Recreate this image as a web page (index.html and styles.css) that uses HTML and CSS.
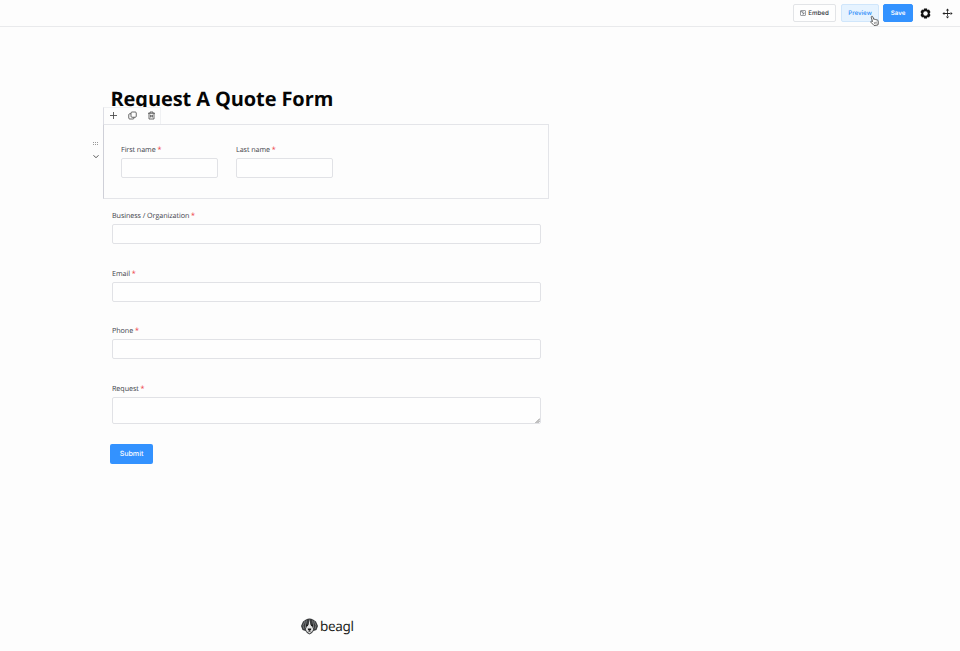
FILE: index.html
```html
<!DOCTYPE html>
<html lang="en">
<head>
<meta charset="utf-8">
<title>Request A Quote Form</title>
<link rel="stylesheet" href="styles.css">
</head>
<body>
<header class="topbar">
  <button class="btn embed"><svg width="6" height="6" viewBox="0 0 12 12" fill="none" stroke="#5c6168" stroke-width="1.2"><rect x="1" y="1" width="10" height="10" rx="1"/><path d="M1 3.500h6M3 3l5 5M8 4.500V8H4.500"/></svg><span>Embed</span></button>
  <button class="btn preview"><span>Preview</span>
    <svg class="cursor" width="9" height="11" viewBox="0 0 18 22"><path d="M5 13L2.500 4.500C2 2.500 4.700 1.500 5.500 3.500L8 9c.5-1.200 2.500-1 2.800.4.7-1 2.400-.6 2.600.8.9-.7 2.500-.2 2.700 1.500l.6 3.800c.3 1.500-.7 3-1 4.500L8.200 21C7 19 4 17.500 1.800 14.500c-1-1.600 1-3 3.200-1.500z" fill="#fff" stroke="#333" stroke-width="1.600"/><path d="M8.500 14l.7 4M11 13.700l.7 4M13.300 13.300l.7 4" stroke="#444" stroke-width="1"/></svg>
  </button>
  <button class="btn save"><span>Save</span></button>
  <svg class="gear" width="11" height="11" viewBox="0 0 22 22"><path d="M8 1h6l.8 3 3.200-.8 3 5L19 11l2 2.800-3 5-3.200-.8-.8 3H8l-.8-3-3.200.8-3-5L3 11 1 8.200l3-5 3.200.8z" fill="#111"/><circle cx="11" cy="11" r="4.500" fill="#fdfdfd"/></svg>
  <svg class="move" width="11" height="11" viewBox="0 0 22 22" fill="#222"><path d="M10.200 4h1.600v14h-1.600zM4 10.200h14v1.600H4zM11 .8l3.200 4H7.800zM11 21.200l3.200-4H7.800zM.8 11l4-3.200v6.400zM21.200 11l-4-3.200v6.400z"/></svg>
</header>
<main class="page">
  <h1>Request A Quote Form</h1>
  <section class="block">
    <div class="tools">
      <svg width="9" height="9" viewBox="0 0 18 18" fill="none" stroke="#444" stroke-width="1.700"><path d="M9 2v14M2 9h14"/></svg>
      <svg width="9" height="9" viewBox="0 0 18 18" fill="none" stroke="#444" stroke-width="1.600"><rect x="6" y="2" width="10.500" height="10.500" rx="2"/><path d="M6 5.500H3.500a2 2 0 0 0-2 2V14a2 2 0 0 0 2 2H10a2 2 0 0 0 2-2v-1.500"/></svg>
      <svg width="9" height="9" viewBox="0 0 18 18" fill="none" stroke="#444" stroke-width="1.600"><path d="M2 4.500h14M6 4.500V2h6v2.500M4 4.500V16h10V4.500M7.300 7.500v5.500M10.700 7.500v5.500M7 10h4"/></svg>
    </div>
    <div class="handle">
      <svg width="6" height="4" viewBox="0 0 6 4" fill="#999"><path d="M0 0h1v1H0zM2 0h1v1H2zM4 0h1v1H4zM0 2h1v1H0zM2 2h1v1H2zM4 2h1v1H4z"/></svg>
      <svg width="6" height="5" viewBox="0 0 12 10" fill="none" stroke="#555" stroke-width="2"><path d="M1 2.500l5 5 5-5"/></svg>
    </div>
    <label class="field">First name <b>*</b><input type="text"></label>
    <label class="field">Last name <b>*</b><input type="text"></label>
  </section>
  <div class="fields">
    <label class="field">Business / Organization <b>*</b><input type="text"></label>
    <label class="field">Email <b>*</b><input type="text"></label>
    <label class="field">Phone <b>*</b><input type="text"></label>
    <label class="field">Request <b>*</b><span class="area"><svg width="5" height="5" viewBox="0 0 5 5" stroke="#777" stroke-width=".9"><path d="M.5 5L5 .5M2.500 5L5 2.500"/></svg></span></label>
  </div>
  <button class="submit">Submit</button>
</main>
<footer class="brand">
  <svg width="17" height="17" viewBox="0 0 34 34"><path d="M10 3Q17-1 24 3l6 4 4 9-3 8-6 2-3 4-5 3-5-3-3-4-6-2-3-8 4-9z" fill="#3a3c3e"/><path d="M17 2l1.500 11 4 5 2 4-2 5-5.500 4-5.500-4-2-5 2-4 4-5z" fill="#e4e4e4"/><path d="M8 6l-4 9 2 7M26 6l4 9-2 7M11 5l-2 8v7M23 5l2 8v7" fill="none" stroke="#8c8e8f" stroke-width="1.400"/><circle cx="12" cy="14.500" r="1.700" fill="#111"/><circle cx="22" cy="14.500" r="1.700" fill="#111"/><path d="M13.500 21h7l-.5 3-3 2-3-2z" fill="#151515"/><path d="M17 25v3M13 28l4-1 4 1" fill="none" stroke="#444" stroke-width="1.200"/></svg>
  <span>beagl</span>
</footer>
</body>
</html>
```
FILE: styles.css
```css
* { box-sizing: border-box; }
body {
  margin: 0;
  height: 651px;
  overflow: hidden;
  display: flex;
  flex-direction: column;
  background: #fdfdfd;
  color: #3d434b;
  font-family: "Open Sans", sans-serif;
  text-rendering: geometricPrecision;
}
svg { display: block; flex: none; }
button { font-family: Inter, sans-serif; padding: 0; text-rendering: geometricPrecision; }
.topbar {
  height: 27px;
  flex: none;
  display: flex;
  align-items: center;
  justify-content: flex-end;
  padding-right: 7px;
  border-bottom: 1px solid #e9eaec;
}
.btn {
  position: relative;
  height: 18px;
  display: flex;
  align-items: center;
  justify-content: center;
  border: 1px solid #e2e4e7;
  border-radius: 2px;
  font-size: 6.200px;
  font-weight: 500;
  background: #fefefe;
  color: #33383f;
}
.embed { width: 43px; gap: 2px; margin-right: 5px; }
.preview { width: 38px; margin-right: 4px; background: #e6f3ff; border-color: #d0e6fb; color: #2f8ef9; }
.save { width: 30px; background: #3392ff; border-color: #3392ff; color: #fff; font-weight: 600; }
.cursor { position: absolute; left: 28px; top: 10px; }
.gear { margin-left: 7px; }
.move { margin-left: 11px; }
.page { width: 446px; margin: 57px 0 0 103px; }
h1 {
  margin: 0 0 0 7.500px;
  height: 40px;
  font-size: 20px;
  line-height: 30px;
  font-weight: 700;
  letter-spacing: -0.1px;
  color: #050505;
  white-space: nowrap;
}
.block {
  position: relative;
  height: 75px;
  display: flex;
  gap: 18px;
  padding: 18px 0 0 17px;
  border: 1px solid #e4e5e9;
  border-left-color: #cfd0d8;
}
.tools {
  position: absolute;
  left: -1px;
  top: -18px;
  width: 58px;
  height: 17px;
  display: flex;
  align-items: center;
  gap: 10px;
  padding: 0 0 1px 5px;
  background: #fdfdfd;
  border: 1px solid #f0f1f3;
  border-left-color: #dcdde4;
  border-bottom: 0;
}
.handle {
  position: absolute;
  left: -11px;
  top: 17px;
  display: flex;
  flex-direction: column;
  gap: 8px;
}
.field { display: block; font-size: 7.200px; letter-spacing: -0.08px; line-height: 14px; }
.field b { color: #ef4e55; font-weight: 600; }
.block .field { width: 97px; }
.field input, .area {
  display: block;
  width: 100%;
  height: 20px;
  margin: 1px 0 0;
  padding: 0 4px;
  border: 1px solid #e1e2e6;
  border-radius: 2px;
  background: #fefefe;
}
.fields {
  width: 428.500px;
  margin: 10px 0 0 9px;
  display: grid;
  gap: 22.500px;
}
.field .area { height: 27px; display: flex; align-items: flex-end; justify-content: flex-end; padding: 0; }
.submit {
  display: block;
  width: 43px;
  height: 20px;
  margin: 20px 0 0 7px;
  border: 0;
  border-radius: 2px;
  background: #3392ff;
  color: #fff;
  font-size: 7.100px;
  font-weight: 500;
}
.brand {
  display: flex;
  align-items: center;
  gap: 2px;
  height: 20px;
  margin: auto 0 15px 301px;
  color: #1c1e20;
  font: 13.500px/20px "Noto Sans", sans-serif;
  letter-spacing: -0.3px;
}
```
